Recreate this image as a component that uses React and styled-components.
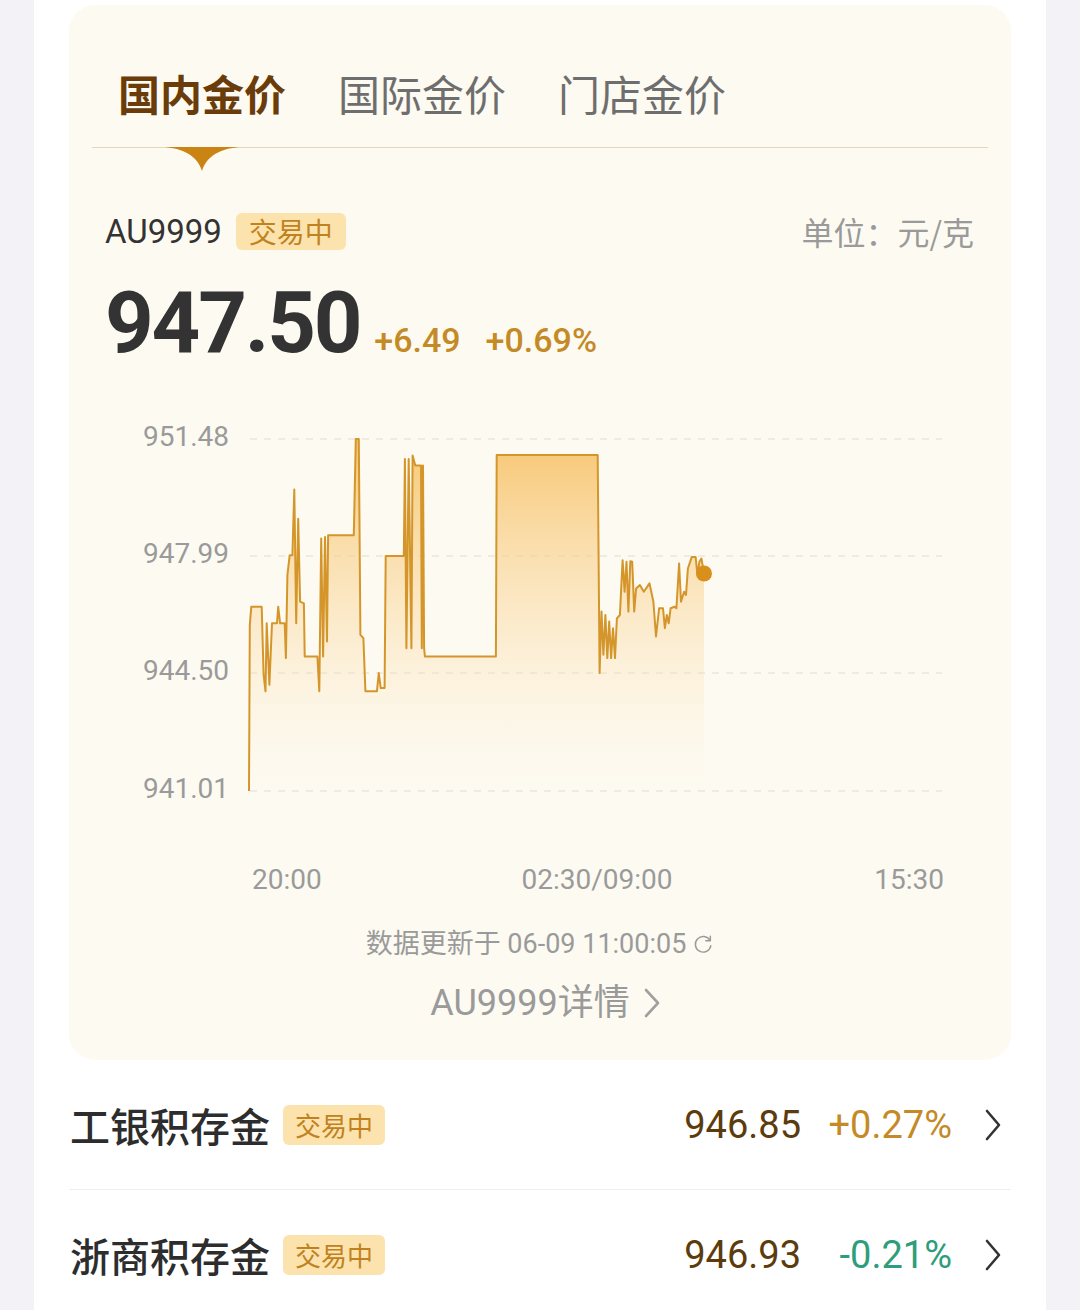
import React from "react";
import styled, { createGlobalStyle } from "styled-components";

const GlobalStyle = createGlobalStyle`
  body {
    margin: 0;
    background: #f2f2f7;
    font-family: Roboto, "Noto Sans CJK SC", sans-serif;
  }
`;

const Page = styled.div`
  box-sizing: border-box;
  width: 1012px;
  min-height: 1310px;
  margin: 0 34px;
  padding: 5px 35px 0;
  background: #fff;
`;

const Card = styled.div`
  background: #fdfaf1;
  border-radius: 26px;
  padding: 0 23px 35px;
`;

const TabRow = styled.div`
  display: flex;
  gap: 52px;
  padding: 63px 26px 29px;
  border-bottom: 1px solid #e3d9b8;
`;

const Tab = styled.div`
  position: relative;
  font-family: "Noto Sans CJK SC", sans-serif;
  font-size: 42px;
  line-height: 50px;
  font-weight: ${(p) => (p.$active ? 700 : 400)};
  color: ${(p) => (p.$active ? "#6a3c0a" : "#6e6e6e")};
`;

const Indicator = styled.svg`
  position: absolute;
  left: 50%;
  top: calc(100% + 29px);
  transform: translateX(-50%);
`;

const Info = styled.div`
  padding: 0 14px 0 13px;
`;

const InfoRow = styled.div`
  display: flex;
  align-items: center;
  justify-content: space-between;
  height: 37px;
  margin-top: 65px;
`;

const Symbol = styled.div`
  display: flex;
  align-items: center;
  gap: 14px;
  font-size: 33px;
  line-height: 37px;
  color: #333;
`;

const Badge = styled.span`
  font-family: "Noto Sans CJK SC", sans-serif;
  background: #fce3ad;
  color: #c0821f;
  border-radius: 6px;
  font-size: ${(p) => p.$size}px;
  line-height: ${(p) => p.$height}px;
  padding: 0 ${(p) => p.$pad}px;
`;

const Unit = styled.div`
  font-family: "Noto Sans CJK SC", sans-serif;
  font-size: 32px;
  line-height: 37px;
  color: #9a9a9a;
`;

const PriceRow = styled.div`
  display: flex;
  align-items: baseline;
  margin-top: 29px;
`;

const Price = styled.div`
  font-size: 85px;
  line-height: 88px;
  font-weight: 700;
  letter-spacing: -2.2px;
  color: #333;
`;

const Change = styled.span`
  font-size: 34px;
  font-weight: 500;
  color: #c48a26;
  margin-left: ${(p) => p.$gap}px;
`;

const Chart = styled.svg`
  display: block;
  margin-top: 46px;
  font-family: Roboto, sans-serif;
`;

const Updated = styled.div`
  display: flex;
  align-items: center;
  justify-content: center;
  gap: 6px;
  font-size: 27px;
  line-height: 36px;
  color: #9a9a9a;
`;

const Detail = styled.div`
  display: flex;
  align-items: center;
  justify-content: center;
  gap: 14px;
  margin-top: 19px;
  padding-left: 10px;
  font-size: 36px;
  line-height: 44px;
  color: #9a9a9a;
`;

const Row = styled.div`
  display: flex;
  align-items: center;
  height: 129px;
  padding: 0 10px 0 1px;
  border-bottom: ${(p) => (p.$last ? "none" : "1px solid #eeeeee")};
`;

const Name = styled.div`
  font-family: "Noto Sans CJK SC", sans-serif;
  font-size: 40px;
  font-weight: 500;
  color: #2d2d2d;
  margin-right: 13px;
`;

const RowPrice = styled.div`
  margin-left: auto;
  font-size: 38px;
  color: #5c3b0d;
`;

const RowChange = styled.div`
  min-width: 126px;
  text-align: right;
  margin-left: 25px;
  margin-right: 33px;
  font-size: 38px;
  color: ${(p) => (p.$down ? "#2e9d7b" : "#c48a26")};
`;

const Chevron = ({ w, h, color, stroke }) => (
  <svg width={w} height={h} viewBox={`0 0 ${w} ${h}`}>
    <polyline
      points={`2,2 ${w - 2},${h / 2} 2,${h - 2}`}
      fill="none"
      stroke={color}
      strokeWidth={stroke}
      strokeLinecap="round"
      strokeLinejoin="round"
    />
  </svg>
);

const Refresh = () => (
  <svg width="22" height="22" viewBox="0 0 24 24" fill="none" stroke="#9a9a9a" strokeWidth="1.6" strokeLinecap="round" strokeLinejoin="round">
    <path d="M19.5 8A8.5 8.5 0 1 0 20.5 14" />
    <path d="M20 3.5V8.5H15" />
  </svg>
);

// traced from the reference (zoomed coords), mapped into chart space
const raw = [
  [312, 1170], [314, 670], [318, 615], [345, 615], [350, 820], [355, 870], [358, 665],
  [365, 850], [372, 665], [385, 665], [388, 615], [393, 665], [405, 665], [408, 770],
  [412, 520], [418, 460], [425, 460], [430, 262], [435, 665], [440, 350], [445, 600],
  [455, 605], [457, 765], [490, 765], [495, 870], [500, 410], [505, 765], [510, 405],
  [515, 720], [518, 400], [585, 400], [590, 110], [598, 110], [602, 700], [610, 710],
  [615, 870], [645, 870], [650, 815], [655, 860], [665, 860], [668, 462], [715, 462],
  [718, 170], [722, 740], [728, 170], [735, 740], [738, 160], [745, 190], [760, 190],
  [762, 740], [765, 190], [768, 740], [770, 765], [955, 765], [957, 158], [1220, 158],
  [1225, 815], [1230, 630], [1235, 760], [1240, 640], [1245, 770], [1250, 660],
  [1255, 770], [1260, 680], [1265, 770], [1270, 650], [1278, 640], [1285, 475],
  [1290, 570], [1295, 480], [1300, 630], [1305, 478], [1310, 480], [1315, 630],
  [1320, 560], [1330, 550], [1340, 570], [1355, 545], [1365, 600], [1372, 705],
  [1380, 620], [1390, 620], [1395, 680], [1400, 640], [1405, 665], [1410, 620],
  [1420, 615], [1425, 620], [1432, 485], [1437, 600], [1445, 570], [1450, 580],
  [1455, 500], [1465, 465], [1475, 465], [1480, 520], [1485, 480], [1490, 470],
  [1497, 515],
];
const pts = raw.map(([x, y]) => [
  +(249 + (x - 312) * 0.384 - 92).toFixed(1),
  +(436 + (y - 110) * 0.332 - 410).toFixed(1),
]);
const linePath = "M" + pts.map((p) => p.join(" ")).join(" L");
const last = pts[pts.length - 1];
const areaPath = `${linePath} L${last[0]} 380 L${pts[0][0]} 380 Z`;

const grid = [
  { y: 26, label: "951.48" },
  { y: 143, label: "947.99" },
  { y: 260, label: "944.50" },
  { y: 378, label: "941.01" },
];

const PriceChart = () => (
  <Chart width="896" height="513" viewBox="0 0 896 513">
    <defs>
      <linearGradient id="fill" x1="0" y1="26" x2="0" y2="380" gradientUnits="userSpaceOnUse">
        <stop offset="0" stopColor="#f7c46c" stopOpacity="0.95" />
        <stop offset="0.5" stopColor="#f9d597" stopOpacity="0.45" />
        <stop offset="1" stopColor="#fdf0d8" stopOpacity="0" />
      </linearGradient>
    </defs>
    {grid.map((g) => (
      <g key={g.label}>
        <line x1="158" x2="850" y1={g.y} y2={g.y} stroke="#e9e6de" strokeWidth="1.5" strokeDasharray="7 7" />
        <text x="137" y={g.y} textAnchor="end" dominantBaseline="middle" fontSize="28" fill="#9a9a9a">
          {g.label}
        </text>
      </g>
    ))}
    <path d={areaPath} fill="url(#fill)" />
    <path d={linePath} fill="none" stroke="#d4962a" strokeWidth="2" strokeLinejoin="round" />
    <circle cx={last[0]} cy={last[1]} r="8" fill="#d98f1c" />
    <text x="160" y="469" dominantBaseline="middle" fontSize="28" fill="#9a9a9a">20:00</text>
    <text x="505" y="469" textAnchor="middle" dominantBaseline="middle" fontSize="28" fill="#9a9a9a">02:30/09:00</text>
    <text x="852" y="469" textAnchor="end" dominantBaseline="middle" fontSize="28" fill="#9a9a9a">15:30</text>
  </Chart>
);

const rows = [
  { name: "工银积存金", price: "946.85", change: "+0.27%", down: false },
  { name: "浙商积存金", price: "946.93", change: "-0.21%", down: true },
];

export default function App() {
  return (
    <>
      <GlobalStyle />
      <Page>
        <Card>
          <TabRow>
            <Tab $active>
              国内金价
              <Indicator width="74" height="24" viewBox="0 0 74 24">
                <path d="M0 0 H74 C56 2 42 8 37 24 C32 8 18 2 0 0 Z" fill="#c98414" />
              </Indicator>
            </Tab>
            <Tab>国际金价</Tab>
            <Tab>门店金价</Tab>
          </TabRow>
          <Info>
            <InfoRow>
              <Symbol>
                AU9999
                <Badge $size={28} $height={37} $pad={13}>交易中</Badge>
              </Symbol>
              <Unit>单位：元/克</Unit>
            </InfoRow>
            <PriceRow>
              <Price>947.50</Price>
              <Change $gap={14}>+6.49</Change>
              <Change $gap={25}>+0.69%</Change>
            </PriceRow>
          </Info>
          <PriceChart />
          <Updated>
            <span>数据更新于 06-09 11:00:05</span>
            <Refresh />
          </Updated>
          <Detail>
            AU9999详情
            <Chevron w={16} h={30} color="#a0a0a0" stroke={2.6} />
          </Detail>
        </Card>
        {rows.map((r, i) => (
          <Row key={r.name} $last={i === rows.length - 1}>
            <Name>{r.name}</Name>
            <Badge $size={26} $height={40} $pad={12}>交易中</Badge>
            <RowPrice>{r.price}</RowPrice>
            <RowChange $down={r.down}>{r.change}</RowChange>
            <Chevron w={16} h={32} color="#333" stroke={2.6} />
          </Row>
        ))}
      </Page>
    </>
  );
}
